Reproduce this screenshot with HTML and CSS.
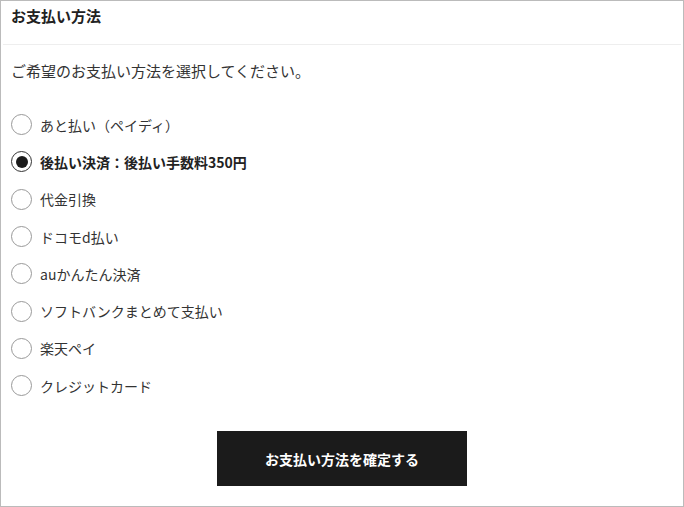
FILE: index.html
```html
<!DOCTYPE html>
<html lang="ja">
    <head>
        <meta charset="UTF-8">
        <meta name="viewport" content="width=device-width, initial-scale=1.0">
        <title>お支払い方法</title>
        <link rel="stylesheet" href="styles.css">
    </head>
    <body>
        <main class="payment-box">
            <header class="payment-header">
                <h2>お支払い方法</h2>
            </header>
            <section class="payment-body">
                <p class="payment-lead">ご希望のお支払い方法を選択してください。</p>
                <ul class="payment-list">
                    <li><label><span class="radio"></span>あと払い（ペイディ）</label></li>
                    <li class="checked"><label><span class="radio"></span>後払い決済：後払い手数料350円</label></li>
                    <li><label><span class="radio"></span>代金引換</label></li>
                    <li><label><span class="radio"></span>ドコモd払い</label></li>
                    <li><label><span class="radio"></span>auかんたん決済</label></li>
                    <li><label><span class="radio"></span>ソフトバンクまとめて支払い</label></li>
                    <li><label><span class="radio"></span>楽天ペイ</label></li>
                    <li><label><span class="radio"></span>クレジットカード</label></li>
                </ul>
                <div class="payment-submit">
                    <button id="confirm-btn">お支払い方法を確定する</button>
                </div>
            </section>
        </main>
    </body>
</html>
```
FILE: styles.css
```css
*
{
    box-sizing: border-box;
}
body
{
    margin: 0;
    background-color: #fff;
    font-family: "Noto Sans CJK JP", "Noto Sans", sans-serif;
    color: #333;
    font-size: 14px;
}
.payment-box
{
    width: 684px;
    height: 507px;
    border: 1px solid #bbb;
}
.payment-header
{
    margin: 0 2px;
    height: 44px;
    padding: 5px 8px 0;
    border-bottom: 1px solid #eee;
}
.payment-header h2
{
    margin: 0;
    font-size: 15px;
    line-height: 20px;
    font-weight: bold;
    color: #222;
}
.payment-body
{
    padding: 16px 10px 0;
}
.payment-lead
{
    margin: 0;
    font-size: 15px;
    line-height: 20px;
}
.payment-list
{
    list-style: none;
    margin: 25px 0 0;
    padding: 0;
}
.payment-list li
{
    height: 37.3px;
    display: flex;
    align-items: center;
}
.payment-list label
{
    display: flex;
    align-items: center;
    gap: 8px;
    cursor: pointer;
}
.radio
{
    width: 21px;
    height: 21px;
    border: 1px solid #999;
    border-radius: 50%;
    display: flex;
    align-items: center;
    justify-content: center;
}
.checked label
{
    font-weight: bold;
    color: #222;
}
.checked .radio
{
    border: 1.5px solid #333;
}
.checked .radio::after
{
    content: "";
    width: 12px;
    height: 12px;
    border-radius: 50%;
    background-color: #1b1b1b;
}
.payment-submit
{
    margin-top: 27px;
    display: flex;
    justify-content: center;
}
#confirm-btn
{
    width: 250px;
    height: 55px;
    border: none;
    background-color: #1b1b1b;
    color: #fff;
    font-family: inherit;
    font-size: 14px;
    font-weight: bold;
    cursor: pointer;
}
```
